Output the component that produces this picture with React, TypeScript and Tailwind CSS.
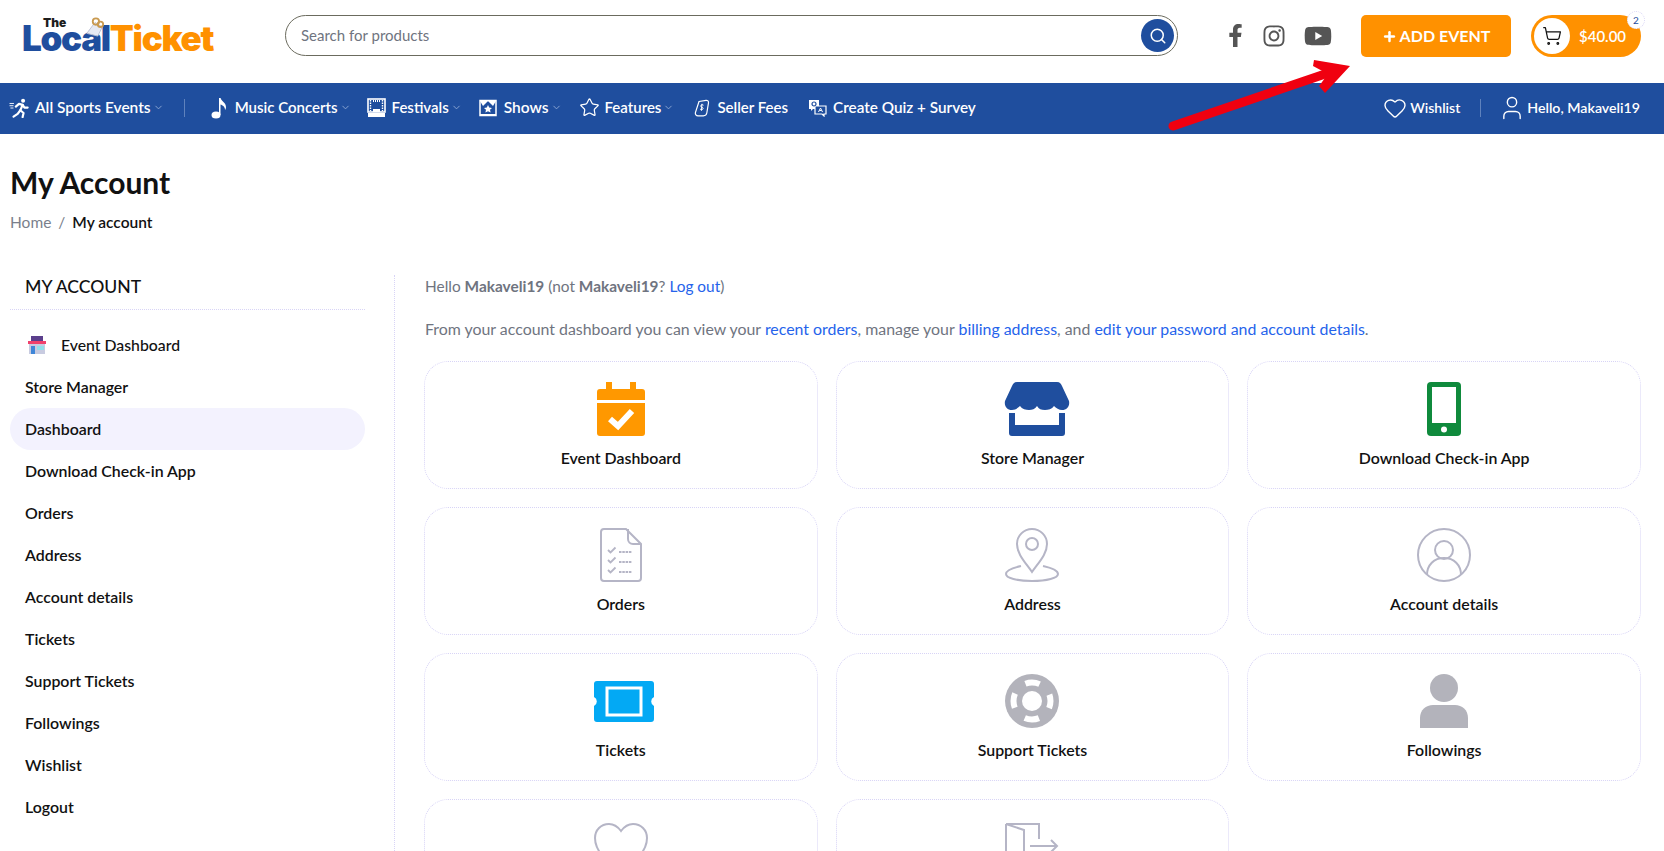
import { ChevronDown, Heart, Plus, Search, ShoppingCart, Star, User } from "lucide-react";
import { FaFacebookF, FaInstagram, FaYoutube } from "react-icons/fa";
import type { ReactNode } from "react";

const FONT = "font-['Lato','Inter',sans-serif]";

const SIDE_LINKS = [
  "Store Manager",
  "Dashboard",
  "Download Check-in App",
  "Orders",
  "Address",
  "Account details",
  "Tickets",
  "Support Tickets",
  "Followings",
  "Wishlist",
  "Logout",
];

function RunnerIcon() {
  return (
    <svg width="20" height="20" viewBox="0 0 22 22" fill="none" stroke="white" strokeWidth="2.400" strokeLinecap="round" strokeLinejoin="round" className="shrink-0">
      <circle cx="15.500" cy="3" r="2.200" fill="white" stroke="none" />
      <path d="M7.500 9.500L11 6.500l4 1-2.500 6 3.500 3-1 4.500" />
      <path d="M12.500 13.500L9.500 17.500 5 20.500" />
      <path d="M15 7.500l2 3h3.500" />
      <path d="M1 6h4M1 8.500h3.500M2 11h2.500" strokeWidth="1" />
    </svg>
  );
}

function NoteIcon() {
  return (
    <svg width="17" height="22" viewBox="0 0 17 22" fill="white" className="shrink-0">
      <ellipse cx="5" cy="18" rx="4.500" ry="3.500" />
      <path d="M8 1h1.600c.4 3 5.400 4.500 5.400 9 0 1.200-.4 2.400-1 3 .2-3-2.400-4.800-4.500-5.400V18H8z" />
    </svg>
  );
}

function FestivalIcon() {
  return (
    <svg width="19" height="20" viewBox="0 0 19 20" fill="none" stroke="white" className="shrink-0">
      <rect x="1" y="1" width="17" height="13" strokeWidth="1.600" />
      <path d="M3.500 2v11M15.500 2v11" strokeWidth="1.400" strokeDasharray="1.500 1" />
      <path d="M6 3h7" strokeWidth="2" strokeDasharray="1 1" />
      <path d="M6 11h7v3H6zM1 15h17v4H1z" fill="white" stroke="none" />
    </svg>
  );
}

function ShowsIcon() {
  return (
    <svg width="18" height="18" viewBox="0 0 18 18" fill="none" className="shrink-0">
      <rect x="1" y="1.500" width="16" height="15" stroke="white" strokeWidth="1.500" />
      <path d="M1 2h16l-3 5-2-2-3-3-3 3-2 2z" fill="white" />
      <path d="M9 6l1.200 2.600 2.800.3-2 1.900.6 2.800L9 12.200l-2.600 1.400.6-2.800-2-1.900 2.800-.3z" fill="white" />
      <path d="M1 16h16" stroke="white" strokeWidth="2" />
    </svg>
  );
}

function FeeIcon() {
  return (
    <svg width="18" height="18" viewBox="0 0 18 18" fill="none" stroke="white" strokeWidth="1.200" className="shrink-0">
      <path d="M6 2.500l7-1.200c1.600-.2 2.800 1 2.500 2.600L13.800 14c-.3 1.600-1.700 2.800-3.400 2.800H5c-1.800 0-3-1.500-2.600-3.200z" />
      <path d="M10.500 6.200c-1-.8-2.800-.4-2.800.8 0 1.600 2.600 1 2.400 2.600-.2 1.200-2 1.300-3 .5M9 4.800l-.6 7" strokeWidth="1" />
    </svg>
  );
}

function QuizIcon() {
  return (
    <svg width="19" height="18" viewBox="0 0 19 18" fill="none" className="shrink-0">
      <path d="M1 1h10v9H5l-2 2v-2H1z" fill="white" />
      <path d="M7 7h11v8h-2v2l-2-2H7z" fill="#1f4e9e" stroke="white" strokeWidth="1.200" />
      <circle cx="6" cy="5" r="2" stroke="#1f4e9e" strokeWidth="1.200" />
      <path d="M10.500 13l2-4 2 4M11.500 11.500h2" stroke="white" strokeWidth="1" />
    </svg>
  );
}

function NavItem({
  icon,
  label,
  caret,
  className,
  textClass,
  gapClass,
}: {
  icon: ReactNode;
  label: string;
  caret?: boolean;
  className?: string;
  textClass?: string;
  gapClass?: string;
}) {
  return (
    <a className={`flex items-center ${className ?? ""}`}>
      <span className="flex w-[19px] shrink-0 justify-center">{icon}</span>
      <span className={`whitespace-nowrap font-semibold text-white ${gapClass ?? "ml-[6px]"} ${textClass ?? "text-[15px]"}`}>
        {label}
      </span>
      {caret && <ChevronDown size={11} className="ml-[2px] text-[#8fa8d4]" />}
    </a>
  );
}

function Logo() {
  return (
    <div className="relative h-[44px] w-[228px] shrink-0 font-['Inter',sans-serif] font-black">
      <span className="absolute left-[43px] top-[3px] text-[12px] leading-[10px] text-[#1d1d1d]">The</span>
      <div className="absolute left-[22px] top-[13px] flex text-[35px] leading-[20px] tracking-[-1.300px]">
        <span className="text-[#1f4e9e]">Local</span>
        <span className="text-[#ff9100]">Ticket</span>
      </div>
      <svg className="absolute left-[84px] top-[2px]" width="22" height="20" viewBox="0 0 24 22">
        <path d="M3 18L12 6l8 5-5 10z" fill="#e6e9f3" stroke="#b9bfd2" />
        <circle cx="13" cy="5" r="3.500" fill="none" stroke="#c99a50" strokeWidth="2" />
        <circle cx="18" cy="8" r="3" fill="none" stroke="#c99a50" strokeWidth="2" />
      </svg>
    </div>
  );
}

function CalendarIcon() {
  return (
    <svg width="48" height="54" viewBox="0 0 48 54">
      <path d="M9 0h6v7h18V0h6v7h6a3 3 0 0 1 3 3v8H0v-8a3 3 0 0 1 3-3h6z" fill="#ff9800" />
      <path d="M0 21h48v30a3 3 0 0 1-3 3H3a3 3 0 0 1-3-3z" fill="#ff9800" />
      <path d="M13 37l8 7 14-15" fill="none" stroke="white" strokeWidth="6" />
    </svg>
  );
}

function StoreIcon() {
  return (
    <svg width="76" height="54" viewBox="-10 0 76 54" fill="#1f4e9e">
      <path d="M13 0h40c3 0 4 2 5 4l7 15c1 5-2 9-7 9-3 0-6-2-8-4-2 3-6 4-9 4-4 0-6-1-8-4-2 3-5 4-8 4s-7-1-9-4c-2 2-5 4-8 4-5 0-8-4-7-9L8 4c1-2 2-4 5-4z" />
      <path d="M5 31h6v12h44V31h6v20a3 3 0 0 1-3 3H8a3 3 0 0 1-3-3z" />
    </svg>
  );
}

function PhoneIcon() {
  return (
    <svg width="34" height="54" viewBox="0 0 34 54">
      <rect width="34" height="54" rx="4" fill="#0f8a3c" />
      <rect x="5" y="5" width="24" height="36" fill="white" />
      <circle cx="17" cy="47.500" r="3" fill="white" />
    </svg>
  );
}

function OrdersIcon() {
  return (
    <svg width="44" height="54" viewBox="1 0 44 54" fill="none" stroke="#b5b5c6" strokeWidth="2">
      <path d="M6 1h22l15 15v34a3 3 0 0 1-3 3H6a3 3 0 0 1-3-3V4a3 3 0 0 1 3-3z" />
      <path d="M30 1v10a5 5 0 0 0 5 5h8" />
      <path d="M10 22l2.500 2.500 5-5M10 32l2.500 2.500 5-5M10 42l2.500 2.500 5-5" strokeWidth="1.800" />
      <path d="M21 24h13M21 34h13M21 44h13" strokeDasharray="2.500 .8" />
    </svg>
  );
}

function PinIcon() {
  return (
    <svg width="54" height="54" viewBox="0 0 54 54" fill="none" stroke="#b5b5c6" strokeWidth="2">
      <path d="M27 44C20 34 12 26 12 16a15 15 0 0 1 30 0c0 10-8 18-15 28z" />
      <circle cx="27" cy="16" r="6" />
      <path d="M16 38C7 40 1 43 1 46c0 4 11 7 26 7s26-3 26-7c0-3-6-6-15-8" />
    </svg>
  );
}

function AccountIcon() {
  return (
    <svg width="54" height="54" viewBox="0 0 54 54" fill="none" stroke="#b5b5c6" strokeWidth="2">
      <circle cx="27" cy="27" r="26" />
      <circle cx="27" cy="22" r="9" />
      <path d="M10 47c0-10 7-17 17-17s17 7 17 17" />
    </svg>
  );
}

function TicketIcon() {
  return (
    <svg width="68" height="41" viewBox="0 0 68 41">
      <path d="M10 0h54a3 3 0 0 1 3 3v13a5 5 0 0 0 0 9v13a3 3 0 0 1-3 3H10a3 3 0 0 1-3-3V25a5 5 0 0 0 0-9V3a3 3 0 0 1 3-3z" fill="#03a9f4" />
      <rect x="20" y="7" width="34" height="27" fill="#03a9f4" stroke="white" strokeWidth="3" />
    </svg>
  );
}

function LifebuoyIcon() {
  return (
    <svg width="54" height="54" viewBox="0 0 54 54" fill="none">
      <circle cx="27" cy="27" r="27" fill="#b3b3bb" />
      <circle cx="27" cy="27" r="18.500" stroke="white" strokeWidth="6" strokeDasharray="14.500 14.560" strokeDashoffset="7.250" />
      <circle cx="27" cy="27" r="10" fill="white" />
    </svg>
  );
}

function FollowIcon() {
  return (
    <svg width="50" height="54" viewBox="0 0 50 54" fill="#b3b3bb">
      <ellipse cx="25" cy="14" rx="14" ry="14" />
      <path d="M1 54V44c0-8 6-13 13-13h22c7 0 13 5 13 13v10z" />
    </svg>
  );
}

function HeartOutline() {
  return (
    <svg width="54" height="54" viewBox="0 -3 54 54" fill="none" stroke="#b5b5c6" strokeWidth="2">
      <path d="M27 50C12 38 1 28 1 15 1 7 7 1 15 1c5 0 9 3 12 7 3-4 7-7 12-7 8 0 14 6 14 14 0 13-11 23-26 35z" />
    </svg>
  );
}

function ExitIcon() {
  return (
    <svg width="54" height="54" viewBox="0 -3 54 54" fill="none" stroke="#b5b5c6" strokeWidth="2">
      <path d="M1 1h33v15M34 31v20H19M1 1v44l18 6V7L1 1" />
      <path d="M25 23h27M46 17l6 6-6 6" />
    </svg>
  );
}

const CARDS: { label: string; icon: ReactNode }[] = [
  { label: "Event Dashboard", icon: <CalendarIcon /> },
  { label: "Store Manager", icon: <StoreIcon /> },
  { label: "Download Check-in App", icon: <PhoneIcon /> },
  { label: "Orders", icon: <OrdersIcon /> },
  { label: "Address", icon: <PinIcon /> },
  { label: "Account details", icon: <AccountIcon /> },
  { label: "Tickets", icon: <TicketIcon /> },
  { label: "Support Tickets", icon: <LifebuoyIcon /> },
  { label: "Followings", icon: <FollowIcon /> },
  { label: "Wishlist", icon: <HeartOutline /> },
  { label: "Logout", icon: <ExitIcon /> },
];

export default function App() {
  return (
    <div className={`relative bg-white text-[#111] ${FONT}`}>
      {/* Top header */}
      <header className="flex h-[83px] items-start pt-[15px]">
        <Logo />
        <div className="ml-[57px] flex h-[41px] w-[893px] shrink-0 items-center rounded-full border border-[#6b6b5e] pl-[15px] pr-[3px]">
          <span className="flex-1 text-[15px] text-[#6f7480]">Search for products</span>
          <span className="flex h-[33px] w-[33px] items-center justify-center rounded-full bg-[#1f4e9e]">
            <Search size={18} className="text-white" />
          </span>
        </div>
        <div className="ml-[46px] flex h-[41px] items-center text-[#555]">
          <FaFacebookF size={23} />
          <FaInstagram size={24} className="ml-[15px]" />
          <FaYoutube size={28} className="ml-[18px]" />
        </div>
        <button className="ml-[29px] flex h-[42px] w-[150px] shrink-0 items-center justify-center rounded-[5px] bg-[#ff9100] text-[16px] font-bold text-white">
          <Plus size={15} strokeWidth={4} className="mr-[3px]" />
          ADD EVENT
        </button>
        <div className="relative ml-[20px] flex h-[42px] w-[110px] shrink-0 items-center rounded-full bg-[#ff9100] pl-[3px]">
          <span className="flex h-[36px] w-[36px] items-center justify-center rounded-full bg-white">
            <ShoppingCart size={20} strokeWidth={1.500} className="text-[#111]" />
          </span>
          <span className="ml-[9px] text-[15px] font-semibold text-white">$40.00</span>
          <span className="absolute -right-[4px] -top-[4px] flex h-[18px] w-[18px] items-center justify-center rounded-full border border-dotted border-[#d8d4f6] bg-white text-[10px] text-[#1f4e9e]">
            2
          </span>
        </div>
      </header>

      {/* Blue nav */}
      <nav className="flex h-[51px] items-center bg-[#1f4e9e] pb-[2px] pl-[9px] pr-[24px]">
        <NavItem icon={<RunnerIcon />} label="All Sports Events" textClass="text-[15.500px]" gapClass="ml-[7px]" caret />
        <span className="ml-[20px] h-[18px] w-px bg-[#5f82bd]" />
        <NavItem className="ml-[25px]" icon={<NoteIcon />} label="Music Concerts" caret />
        <NavItem className="ml-[16px]" icon={<FestivalIcon />} label="Festivals" caret />
        <NavItem className="ml-[17px]" icon={<ShowsIcon />} label="Shows" textClass="text-[15.500px]" caret />
        <NavItem className="ml-[18px]" icon={<Star size={21} className="shrink-0 text-white" strokeWidth={1.400} />} label="Features" caret />
        <NavItem className="ml-[18px]" icon={<FeeIcon />} label="Seller Fees" />
        <NavItem className="ml-[20px]" icon={<QuizIcon />} label="Create Quiz + Survey" textClass="text-[15.300px]" />
        <div className="ml-auto flex items-center">
          <NavItem
            icon={<Heart size={24} className="shrink-0 text-white" strokeWidth={1.400} />}
            label="Wishlist"
            textClass="text-[14px]"
          />
          <span className="ml-[20px] mr-[21px] h-[18px] w-px bg-[#5f82bd]" />
          <NavItem
            icon={<User size={28} className="shrink-0 text-white" strokeWidth={1.200} />}
            label="Hello, Makaveli19"
            textClass="text-[14.200px]"
          />
        </div>
      </nav>

      {/* Title */}
      <div className="pl-[10px] pt-[30px]">
        <h1 className="text-[30px] font-bold leading-[36px] text-[#111]">My Account</h1>
        <div className="mt-[12px] flex items-center text-[15.500px] leading-[20px]">
          <span className="text-[#7a7f8c]">Home</span>
          <span className="mx-[7px] text-[#7a7f8c]">/</span>
          <span className="font-semibold text-[#111]">My account</span>
        </div>
      </div>

      <div className="mt-[43px] flex items-start pl-[10px]">
        {/* Sidebar */}
        <aside className="w-[355px] shrink-0">
          <h2 className="border-b border-dotted border-[#d8d4f6] pb-[10px] pl-[15px] text-[17.600px] font-medium leading-[24px] text-[#111]">
            MY ACCOUNT
          </h2>
          <div className="mt-[14px] flex h-[42px] items-center pl-[17px] text-[15.800px] font-medium">
            <svg width="20" height="18" viewBox="0 0 20 18" className="mr-[14px]">
              <rect x="4" y="0" width="12" height="5" fill="#5b3f8c" />
              <rect x="1" y="5" width="18" height="3" fill="#f0416c" />
              <rect x="2" y="8" width="16" height="10" fill="#c8cbe0" />
              <rect x="4" y="10" width="4" height="8" fill="#3f86d8" />
              <rect x="10" y="10" width="7" height="4" fill="#8fe0ea" />
            </svg>
            Event Dashboard
          </div>
          <div className="flex flex-col">
            {SIDE_LINKS.map((link) => (
              <a
                key={link}
                className={`flex h-[42px] items-center rounded-full pl-[15px] text-[15.900px] font-semibold ${
                  link === "Dashboard" ? "bg-[#f3f2fe]" : ""
                }`}
              >
                {link}
              </a>
            ))}
          </div>
        </aside>

        {/* Main */}
        <main className="ml-[29px] min-h-[600px] flex-1 border-l border-dotted border-[#d8d4f6] pl-[29px] pr-[23px]">
          <p className="pl-px text-[15.400px] leading-[22px] text-[#6f7480]">
            Hello <b className="font-bold">Makaveli19</b> (not <b className="font-bold">Makaveli19</b>?{" "}
            <a className="text-[#2563eb]">Log out</a>)
          </p>
          <p className="mt-[20px] pl-px text-[15.900px] leading-[24px] text-[#6f7480]">
            From your account dashboard you can view your <a className="text-[#2563eb]">recent orders</a>, manage your{" "}
            <a className="text-[#2563eb]">billing address</a>, and{" "}
            <a className="text-[#2563eb]">edit your password and account details</a>.
          </p>
          <div className="mt-[20px] grid grid-cols-3 gap-[18px]">
            {CARDS.map((card) => (
              <div
                key={card.label}
                className="flex h-[128px] flex-col items-center rounded-[24px] border border-dotted border-[#d8d4f6] pt-[20px]"
              >
                <div className="flex h-[54px] items-center justify-center">{card.icon}</div>
                <span className="mt-[11px] text-[15.900px] font-semibold leading-[22px] text-[#111]">{card.label}</span>
              </div>
            ))}
          </div>
        </main>
      </div>

      {/* Red annotation arrow */}
      <svg className="pointer-events-none absolute left-[1160px] top-[50px]" width="200" height="90" viewBox="0 0 200 90">
        <path d="M13 76L168 23" stroke="#f00010" strokeWidth="9" strokeLinecap="round" />
        <path d="M154 10l36 6-25 27-6-7 9-12-15-8z" fill="#f00010" />
      </svg>
    </div>
  );
}
